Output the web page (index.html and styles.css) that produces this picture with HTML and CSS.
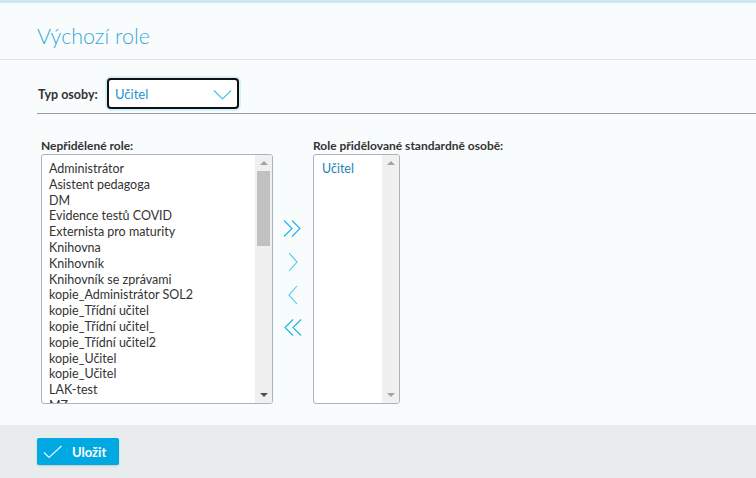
FILE: index.html
```html
<!DOCTYPE html>
<html lang="cs">
<head>
<meta charset="utf-8">
<title>Výchozí role</title>
<link rel="stylesheet" href="styles.css">
</head>
<body>
<div class="page">
  <div class="panel">
    <h1 class="title">Výchozí role</h1>
    <div class="filter">
      <label class="filter-label">Typ osoby:</label>
      <div class="select">
        <span class="select-value">Učitel</span>
        <svg class="chev" width="19" height="12" viewBox="0 0 19 12"><path d="M1 1.5 L9.5 10 L18 1.5" fill="none" stroke="#4cc3ec" stroke-width="1.2"/></svg>
      </div>
    </div>
    <div class="columns">
      <div class="col">
        <div class="col-label">Nepřidělené role:</div>
        <div class="listbox wide">
          <ul class="items">
            <li>Administrátor</li>
            <li>Asistent pedagoga</li>
            <li>DM</li>
            <li>Evidence testů COVID</li>
            <li>Externista pro maturity</li>
            <li>Knihovna</li>
            <li>Knihovník</li>
            <li>Knihovník se zprávami</li>
            <li>kopie_Administrátor SOL2</li>
            <li>kopie_Třídní učitel</li>
            <li>kopie_Třídní učitel_</li>
            <li>kopie_Třídní učitel2</li>
            <li>kopie_Učitel</li>
            <li>kopie_Učitel</li>
            <li>LAK-test</li>
            <li>MZ</li>
          </ul>
          <div class="sbar">
            <span class="sarrow up dark"></span>
            <div class="strack"><div class="thumb"></div></div>
            <span class="sarrow down dark"></span>
          </div>
        </div>
      </div>
      <div class="movers">
        <svg width="20" height="20" viewBox="0 0 20 20"><path d="M1 1.5 L9 9.5 L1 17.5 M9 1.5 L17 9.5 L9 17.5" fill="none" stroke="#1fb1e6" stroke-width="1.1"/></svg>
        <svg width="20" height="20" viewBox="0 0 20 20"><path d="M6 1 L14 10 L6 19" fill="none" stroke="#4cc3ec" stroke-width="1.1"/></svg>
        <svg width="20" height="20" viewBox="0 0 20 20"><path d="M14 1 L6 10 L14 19" fill="none" stroke="#4cc3ec" stroke-width="1.1"/></svg>
        <svg width="20" height="20" viewBox="0 0 20 20"><path d="M10 1.5 L2 9.5 L10 17.5 M18 1.5 L10 9.5 L18 17.5" fill="none" stroke="#1fb1e6" stroke-width="1.1"/></svg>
      </div>
      <div class="col">
        <div class="col-label">Role přidělované standardně osobě:</div>
        <div class="listbox narrow">
          <ul class="items">
            <li class="sel">Učitel</li>
          </ul>
          <div class="sbar">
            <span class="sarrow up"></span>
            <div class="strack"></div>
            <span class="sarrow down"></span>
          </div>
        </div>
      </div>
    </div>
  </div>
  <div class="footer">
    <button class="save" type="button">
      <svg width="20" height="14" viewBox="0 0 20 14"><path d="M1 7.5 L6 12.5 L18.5 1" fill="none" stroke="#e9f8fd" stroke-width="1.1"/></svg>
      <span>Uložit</span>
    </button>
  </div>
</div>
</body>
</html>
```
FILE: styles.css
```css
* { box-sizing: border-box; }
html, body { margin: 0; padding: 0; }
body {
  width: 756px;
  height: 478px;
  overflow: hidden;
  font-family: "Lato", "Open Sans", sans-serif;
  background: #e9eced;
  color: #333;
}
.page {
  display: flex;
  flex-direction: column;
  height: 478px;
}
.panel {
  height: 425px;
  background: #f8fcfd;
  border-top: 3px solid #cde8ee;
  display: flex;
  flex-direction: column;
}
.title {
  margin: 0;
  height: 57px;
  border-bottom: 1px solid #e2e6e8;
  padding: 20px 0 0 37px;
  font-weight: 300;
  font-size: 21.5px;
  line-height: 26px;
  color: #3aa7d9;
}
.filter {
  margin-left: 37px;
  height: 54px;
  border-bottom: 1px solid #9a9a9a;
  display: flex;
  align-items: flex-end;
  padding-bottom: 4px;
}
.filter-label {
  font-weight: 700;
  font-size: 12.5px;
  color: #333;
  padding-left: 1px;
  width: 68px;
  align-self: flex-end;
  line-height: 16px;
  padding-bottom: 6px;
}
.select {
  width: 132px;
  height: 31px;
  border-radius: 4px;
  box-shadow: 0 0 0 2px #d4f0fa;
  border: 2px solid #111;
  margin-left: 2px;
  background: #fff;
  display: flex;
  align-items: center;
  justify-content: space-between;
  padding: 0 5px 0 6px;
}
.select-value {
  font-size: 13px;
  color: #1c95cf;
}
.chev { margin-top: 2px; }
.columns {
  display: flex;
  align-items: flex-start;
  padding: 24px 0 0 41px;
}
.col-label {
  font-weight: 700;
  font-size: 12px;
  color: #333;
  height: 16px;
  line-height: 16px;
}
.listbox {
  height: 250px;
  border: 1px solid #a9b5bc;
  border-radius: 3px;
  background: #fff;
  display: flex;
  overflow: hidden;
}
.listbox.wide { width: 232px; }
.listbox.narrow { width: 87px; }
.items {
  list-style: none;
  margin: 0;
  padding: 6px 0 0 7px;
  flex: 1;
  overflow: hidden;
  font-size: 12.5px;
  line-height: 15.8px;
  color: #333;
}
.items li { white-space: nowrap; }
.items li.sel { color: #1c7fb3; padding-left: 1px; }
.sbar {
  width: 17px;
  background: #f0f0f0;
  display: flex;
  flex-direction: column;
  align-items: center;
}
.strack { flex: 1; width: 100%; padding: 0 2px; }
.thumb {
  margin-top: 0;
  height: 75px;
  background: #c1c1c1;
}
.sarrow {
  width: 0;
  height: 0;
  border-left: 4px solid transparent;
  border-right: 4px solid transparent;
  margin: 6px 0;
}
.sarrow.up { border-bottom: 4px solid #a3a3a3; }
.sarrow.down { border-top: 4px solid #a3a3a3; }
.sarrow.up.dark { border-bottom-color: #a3a3a3; }
.sarrow.down.dark { border-top-color: #505050; }
.movers {
  width: 40px;
  align-self: stretch;
  display: flex;
  flex-direction: column;
  align-items: center;
  gap: 13px;
  padding-top: 81px;
  padding-right: 1px;
}
.footer {
  flex: 1;
  padding: 13px 0 0 37px;
}
.save {
  width: 82px;
  height: 27px;
  border: 0;
  border-radius: 2px;
  background: #00a9e2;
  box-shadow: 0 1px 2px rgba(0,0,0,0.15);
  color: #fff;
  font-family: "Lato", "Open Sans", sans-serif;
  font-weight: 700;
  font-size: 13px;
  display: flex;
  align-items: center;
  gap: 9px;
  padding: 0 0 0 6px;
}
```
